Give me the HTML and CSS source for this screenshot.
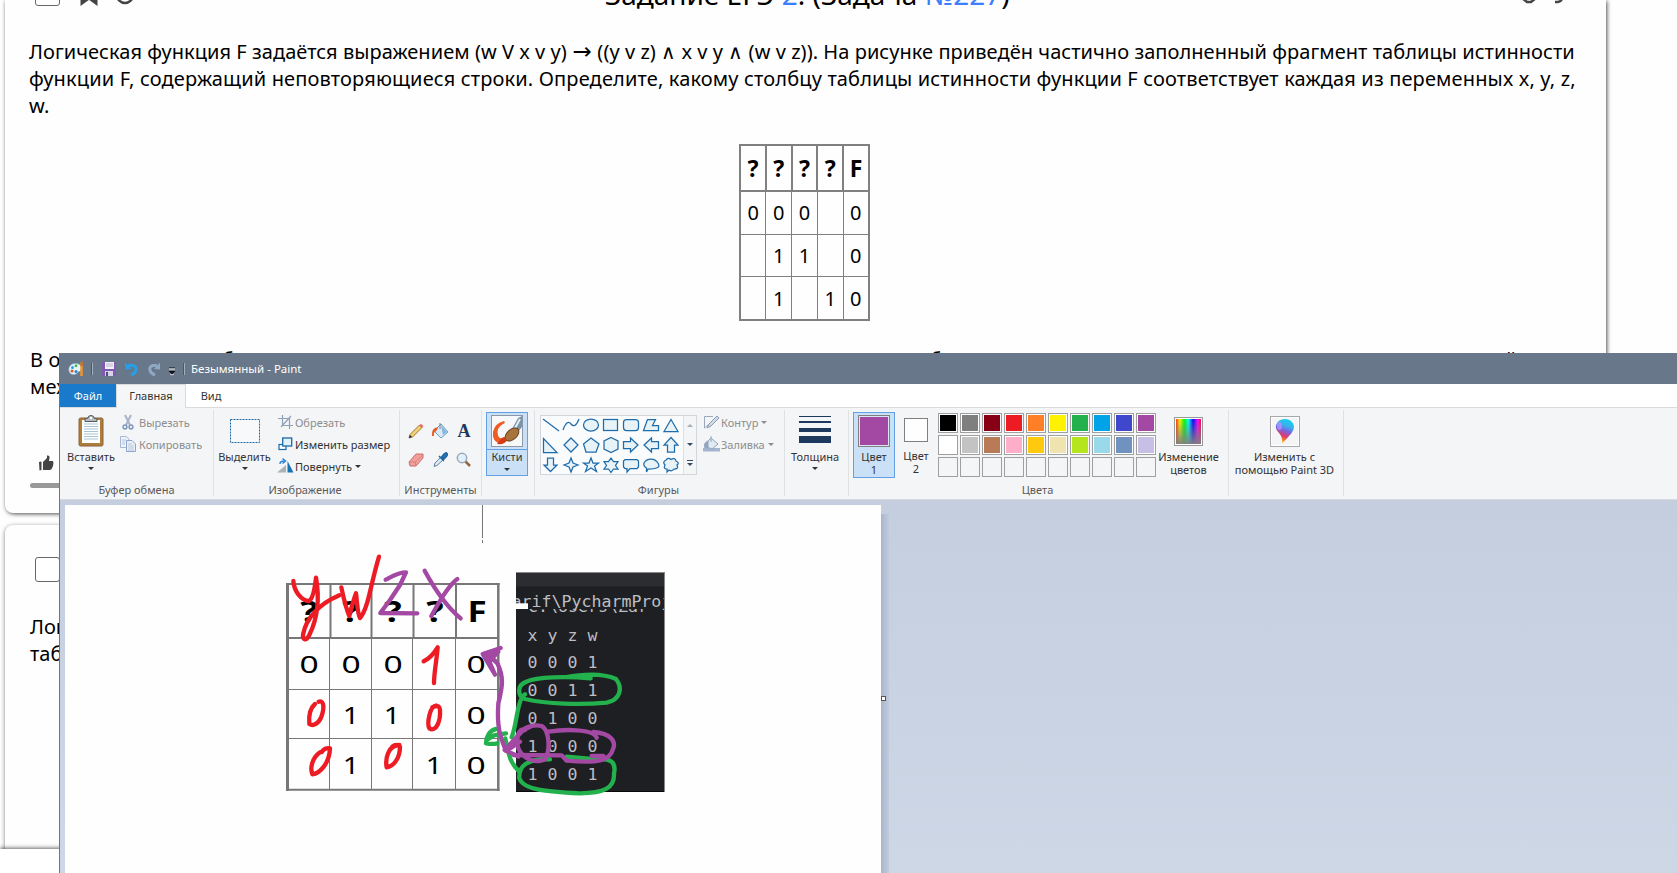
FILE: index.html
```html
<!DOCTYPE html>
<html lang="ru">
<head>
<meta charset="utf-8">
<title>Безымянный - Paint</title>
<link rel="stylesheet" href="styles.css">
</head>
<body>
<main class="page">
  <section class="card card-first">
    <header class="task-head">
      <div class="head-icons">
        <span class="checkbox"></span>
        <svg class="head-star" width="18" height="20" viewBox="0 0 18 20"><path d="M2 0V17L9 12L16 17V0" fill="none" stroke="#444" stroke-width="3"/></svg>
        <svg width="20" height="20" viewBox="0 0 20 20"><circle cx="7" cy="9" r="8" fill="none" stroke="#444" stroke-width="2.5"/></svg>
      </div>
      <h1 class="task-title">Задание ЕГЭ <a>2</a>. (Задача <a>№227</a>)</h1>
      <svg class="head-right" width="50" height="20" viewBox="0 0 50 20"><path d="M1 12L6 16H10L15 12M34 16H37Q41 15 41 12" fill="none" stroke="#444" stroke-width="2.5"/></svg>
    </header>
    <p class="task-text"><span class="l1">Логическая функция F задаётся выражением (w <span class="or">V</span> x v y) <span class="to">→</span> ((y v z) ∧ x v y ∧ (w v z)). На рисунке приведён частично заполненный фрагмент таблицы истинности</span><br><span class="l2">функции F, содержащий неповторяющиеся строки. Определите, какому столбцу таблицы истинности функции F соответствует каждая из переменных x, y, z,</span><br>w.</p>
    <table class="truth">
      <tr><th>?</th><th>?</th><th>?</th><th>?</th><th>F</th></tr>
      <tr><td>0</td><td>0</td><td>0</td><td></td><td>0</td></tr>
      <tr><td></td><td>1</td><td>1</td><td></td><td>0</td></tr>
      <tr><td></td><td>1</td><td></td><td>1</td><td>0</td></tr>
    </table>
    <p class="answer-text">В ответе напишите буквы x, y, z, w в том порядке, в котором идут соответствующие им столбцы. Буквы в ответе пишите подряд, никаких разделителей<br>между буквами ставить не нужно.</p>
    <svg class="thumb" width="16" height="16" viewBox="0 0 16 16"><path d="M1 7L3.500 6.500V15L1.500 15.500ZM5 7L9 3V0.500Q12 0 11.500 3L11 6H15Q16 8 15 11Q14 14.500 12 15H5Z" fill="#444"/></svg>
    <div class="vote-bar"></div>
  </section>
  <section class="card card-second">
    <span class="checkbox"></span>
    <p class="second-text">Логическая функция<br>таблицы истинности</p>
  </section>
  <footer class="bottom-bar"></footer>
</main>

<section class="paint">
  <header class="titlebar">
    <svg width="16" height="16" viewBox="0 0 16 16"><path d="M1 10C0 5 4 2 8 2.500C13 3 14 6 13 9C12 11 11 10 10 11C9 14 2 15 1 10Z" fill="#e6f4fa" stroke="#7bb8d4" stroke-width=".6"/><circle cx="4" cy="10" r="1.500" fill="#e5531f"/><circle cx="4.500" cy="6.500" r="1.500" fill="#2e9fe0"/><circle cx="8" cy="4.800" r="1.400" fill="#3fae49"/><circle cx="8" cy="10.500" r="1.500" fill="#2784c8"/><path d="M13.500 3V15" stroke="#f0962b" stroke-width="2.500"/><path d="M12 1.500L15 0V5H12.500Z" fill="#bd7743"/></svg>
    <i class="tb-sep"></i>
    <svg class="ico-save" width="14" height="14" viewBox="0 0 14 14"><path d="M0 0H14V14H0Z" fill="#7d5cb0"/><path d="M3 0H12V7H3Z" fill="#f4f0f8"/><path d="M4 2H11M4 4H11" stroke="#b9b4c5"/><path d="M3 9H11V14H3Z" fill="#d8d4e8"/><path d="M4 10H6V14H4Z" fill="#58458a"/></svg>
    <svg class="ico-undo" width="14" height="14" viewBox="0 0 14 14"><path d="M3 3.500H8Q12 4.500 11 8.500Q10 11.500 6 13" fill="none" stroke="#259fe8" stroke-width="3"/><path d="M0 .500L.500 7.500L7 7Z" fill="#259fe8"/></svg>
    <svg class="ico-redo" width="14" height="14" viewBox="0 0 14 14"><path d="M10 3.500H6Q2 4.500 3 8.500Q4 11.500 8 13" fill="none" stroke="#8fa9c4" stroke-width="3"/><path d="M13 .500V7.500L7 7Z" fill="#8fa9c4"/></svg>
    <svg class="ico-more" width="8" height="8" viewBox="0 0 8 8"><path d="M1 1H7" stroke="#111"/><path d="M1 2H7" stroke="#fff"/><path d="M.500 4H7.500L4 7.500Z" fill="#111"/><path d="M2 7L4 8L6 7" stroke="#fff" fill="none" stroke-width=".7"/></svg>
    <i class="tb-sep"></i>
    <span class="title">Безымянный - Paint</span>
  </header>
  <nav class="tabs"><span class="tab tab-file">Файл</span><span class="tab tab-home">Главная</span><span class="tab tab-view">Вид</span></nav>

  <div class="ribbon">
    <div class="group g-clip">
      <div class="tools">
        <div class="big">
          <svg width="26" height="32" viewBox="0 0 26 32"><rect x="1" y="3" width="24" height="28" rx="1.500" fill="#ae7c3c" stroke="#8b6537"/><path d="M4 5H22V28H4Z" fill="#fdfefe"/><path d="M6 9H20M6 11.500H20M6 14H20M6 16.500H20M6 19H20M6 21.500H20M6 24H20" stroke="#a9c3d4"/><path d="M7 6.500V4L10 3Q10 .500 13 .500T16 3L19 4V6.500Z" fill="#b4bbc2" stroke="#535a61"/><circle cx="13" cy="3" r="1.200" fill="#fff"/></svg>
          <span>Вставить</span><i class="arrow"></i>
        </div>
        <div class="smalls off">
          <div class="small"><svg width="16" height="16" viewBox="0 0 16 16"><path d="M5 1L10 11M11 1L6 11" stroke="#a7b4c9" stroke-width="2"/><circle cx="5" cy="13" r="1.900" fill="none" stroke="#7f97bd" stroke-width="1.500"/><circle cx="11" cy="13" r="1.900" fill="none" stroke="#7f97bd" stroke-width="1.500"/></svg>Вырезать</div>
          <div class="small"><svg width="16" height="16" viewBox="0 0 16 16"><path d="M.500 .500H6L9 3V11.500H.500Z" fill="#edf3fa" stroke="#a6b8d3"/><path d="M6.500 4.500H12L15.500 8V15.500H6.500Z" fill="#e9f0f8" stroke="#8ea5c9"/><path d="M2 4H6M2 6H5M2 8H5M8 8H12M8 10H14M8 12H14M8 14H14" stroke="#aabdd8" stroke-width=".8"/></svg>Копировать</div>
        </div>
      </div>
      <div class="caption">Буфер обмена</div>
    </div>

    <div class="group g-image">
      <div class="tools">
        <div class="big">
          <svg width="32" height="32" viewBox="0 0 32 32"><rect x="1.500" y="4.500" width="29" height="23" fill="#f7f9fb" stroke="#1a69a8" stroke-dasharray="2 1"/></svg>
          <span>Выделить</span><i class="arrow"></i>
        </div>
        <div class="smalls">
          <div class="small off"><svg width="16" height="16" viewBox="0 0 16 16"><path d="M0 4.500H11.500V15M4.500 1V11.500H15M3 13L13 2" fill="none" stroke="#8fa0ba" stroke-width="1.200"/></svg>Обрезать</div>
          <div class="small"><svg width="16" height="16" viewBox="0 0 16 16"><rect x="1" y="8.500" width="7" height="5" fill="#fff" stroke="#1a69a8" stroke-width="1.200"/><rect x="4.700" y="2" width="9" height="8" fill="#e2f2fa" stroke="#1a69a8" stroke-width="1.300"/></svg>Изменить размер</div>
          <div class="small"><svg width="16" height="16" viewBox="0 0 16 16"><path d="M-1 14.500H8V7Z" fill="#aab2b8"/><path d="M9.500 3L15.500 14.500H9.500Z" fill="#1673b5"/><path d="M2 6Q2 3 6 3M4.500 .500L7.500 3L4.500 5.500" fill="none" stroke="#2783dc" stroke-width="1.500"/></svg>Повернуть<i class="arrow side"></i></div>
        </div>
      </div>
      <div class="caption cap-image">Изображение</div>
    </div>

    <div class="group g-tools">
      <div class="tools tool-grid">
        <svg width="16" height="16" viewBox="0 0 16 16"><path d="M1 15L2 11.500L11.500 2L14 4.500L4.500 14Z" fill="#f2d073" stroke="#9d7b34"/><path d="M1 15L2 12L4 14Z" fill="#222"/><path d="M11 2.500L13 .800L15.500 3.200L13.500 5Z" fill="#e86d65"/></svg>
        <svg width="16" height="16" viewBox="0 0 16 16"><path d="M5 5L9 1L16 9L9 15L3 9Z" fill="#d6e9f5" stroke="#6e9fc4"/><path d="M9 2L15 9L11 12Z" fill="#83b8de"/><path d="M0 13Q-1 5 6 4L5 7Q1 9 2 13Z" fill="#e65a1f"/><path d="M8 0V6" stroke="#7a8088"/></svg>
        <svg width="16" height="16" viewBox="0 0 16 16"><text class="letter-a" x="8" y="14" text-anchor="middle">A</text></svg>
        <svg width="16" height="16" viewBox="0 0 16 16"><path d="M1 10L8 2H15L15 6L8 14H2Z" fill="#f2a09b" stroke="#cb6c69"/><path d="M1 10L7.500 10L15 2.500M7.500 10V14" fill="none" stroke="#dc7e7b"/></svg>
        <svg width="16" height="16" viewBox="0 0 16 16"><path d="M2 14.500L3 11L9 5L11.500 7.500L5 13.500Z" fill="#d8e9f4" stroke="#66849e"/><path d="M7 4L12 9M9 6L12 2Q14 0 15 1.500T14 5L11 8" fill="#2476b5" stroke="#1c639f" stroke-width="1.500"/></svg>
        <svg width="16" height="16" viewBox="0 0 16 16"><path d="M9 9L14 14" stroke="#8e6845" stroke-width="2.500"/><circle cx="6" cy="6" r="4.700" fill="#e0f0fa" stroke="#9aa9b7" stroke-width="1.500"/></svg>
      </div>
      <div class="caption">Инструменты</div>
    </div>

    <div class="group g-brush">
      <div class="brush-btn">
        <div class="brush-top"><svg width="32" height="32" viewBox="0 0 32 32"><rect x=".500" y=".500" width="31" height="31" fill="#f6f8fa" stroke="#8c98a5"/><path d="M13 6Q15 8 12 9Q5 13 7 20Q8 25 14 22L18 24Q13 29 7 28Q1 25 2 17Q4 8 13 6Z" fill="#f05a23"/><path d="M21 14L27 3L31 1V12L25 19Z" fill="#7893aa"/><path d="M23 15L29 4" stroke="#e4edf2" stroke-width="2"/><ellipse cx="21" cy="19.500" rx="8" ry="5" transform="rotate(-42 21 19.500)" fill="#a8743a" stroke="#674522"/><path d="M10 24Q13 20 16 25Q14 30 6 29Z" fill="#d23d18"/></svg></div>
        <span>Кисти</span><i class="arrow"></i>
      </div>
    </div>

    <div class="group g-shapes">
      <div class="tools">
        <div class="gallery">
          <svg class="shapes" width="142" height="58" viewBox="541 416 142 58">
            <g fill="#e8f3f8" stroke="#1f6cab" stroke-width="1.250">
              <path d="M543 419L559 431" fill="none"/><path d="M563 430Q567 419 571 424T579 419" fill="none"/><ellipse cx="591" cy="425" rx="7.500" ry="6"/><rect x="603.500" y="419.500" width="14" height="11"/><rect x="623.500" y="419.500" width="15" height="11" rx="3"/><path d="M643.500 430.500L647.500 419.500H655.500L652.500 425.500H658.500V430.500Z"/><path d="M671 419.500L678 431.500H664Z"/>
              <path d="M543.500 438.500V452.500H557Z"/><path d="M571 438L578 445L571 452L564 445Z"/><path d="M591 438L599 444L596 452H586L583.500 444Z"/><path d="M611 437.500L618 441V449L611 452.500L604 449V441Z"/><path d="M623.500 441.500H630.500V438L638 445L630.500 452V448.500H623.500Z"/><path d="M658.500 441.500H651.500V438L644 445L651.500 452V448.500H658.500Z"/><path d="M667.500 452V445H664L671 437.500L678 445H674.500V452Z"/>
              <path d="M547.500 458V465H544L550.500 471.500L557 465H553.500V458Z"/><path d="M571 458L573 463L578 465L573 467L571 472L569 467L564 465L569 463Z"/><path d="M591 458L593 463H598.500L594.500 466L596.500 471.500L591 468L585.500 471.500L587.500 466L583.500 463H589Z"/><path d="M611 458L613.500 461.500H618L615.500 465.500L618 469H613.500L611 472.500L608.500 469H604L606.500 465.500L604 461.500H608.500Z"/><path d="M625 459.500H637L638.500 461V467L637 468.500H630L627 472V468.500H625L623.500 467V461Z"/><path d="M648 469L646.500 472V468Q643 466 644 463Q646 459 651 459T658.500 464T648 469Z"/><path d="M666 460Q668 457 671 459.500Q675 457 676 461Q680 463 677 465Q679 469 674 469Q672 472 669 470L667 472V469Q663 469 665 465Q662 462 666 460Z"/>
            </g>
          </svg>
          <div class="gal-scroll"><i class="up"></i><i class="down"></i><i class="down bar"></i></div>
        </div>
        <div class="smalls off">
          <div class="small"><svg width="17" height="16" viewBox="0 0 17 16"><path d="M10 2.500H1.500V14L13 4" fill="none" stroke="#9ba9bd"/><path d="M4 14L6 10L14 2L16 4L8 12Z" fill="#d3dbe7" stroke="#8a9ab5"/></svg>Контур<i class="arrow side"></i></div>
          <div class="small"><svg width="17" height="16" viewBox="0 0 17 16"><path d="M0 12H17V15.500H0Z" fill="#a4b4cf"/><path d="M3 7L8 2L15 8L9 13L4 11Z" fill="#e1e9f2" stroke="#92a4c0"/><path d="M2 12Q0 7 5 5V12M8 0V6" fill="#92a4c0" stroke="#92a4c0"/></svg>Заливка<i class="arrow side"></i></div>
        </div>
      </div>
      <div class="caption">Фигуры</div>
    </div>

    <div class="group g-thick">
      <div class="big"><svg width="32" height="32" viewBox="0 0 32 32"><path d="M0 1H32V2H0ZM0 6H32V8H0ZM0 13H32V17H0ZM0 21H32V28H0Z" fill="#1e395f"/></svg><span>Толщина</span><i class="arrow"></i></div>
    </div>

    <div class="group g-colors">
      <div class="tools">
        <div class="color-btn selected"><b class="sw sw-one"></b><span>Цвет<br>1</span></div>
        <div class="color-btn"><b class="sw sw-two"></b><span>Цвет<br>2</span></div>
        <div class="palette">
          <i class="c-black"></i><i class="c-gray"></i><i class="c-dred"></i><i class="c-red"></i><i class="c-orange"></i><i class="c-yellow"></i><i class="c-green"></i><i class="c-cyan"></i><i class="c-indigo"></i><i class="c-purple"></i>
          <i class="c-white"></i><i class="c-silver"></i><i class="c-brown"></i><i class="c-pink"></i><i class="c-gold"></i><i class="c-cream"></i><i class="c-lime"></i><i class="c-sky"></i><i class="c-steel"></i><i class="c-lav"></i>
          <i></i><i></i><i></i><i></i><i></i><i></i><i></i><i></i><i></i><i></i>
        </div>
        <div class="big edit"><div class="rainbow"></div><span>Изменение<br>цветов</span></div>
      </div>
      <div class="caption">Цвета</div>
    </div>

    <div class="group g-3d">
      <div class="big"><svg width="30" height="31" viewBox="0 0 30 31"><defs><linearGradient id="drop" x1=".7" y1="0" x2=".4" y2="1"><stop offset="0" stop-color="#12cfe9"/><stop offset=".28" stop-color="#36b4ef"/><stop offset=".5" stop-color="#7a62df"/><stop offset=".72" stop-color="#e03c6b"/><stop offset="1" stop-color="#ffb000"/></linearGradient></defs><rect x=".500" y=".500" width="29" height="30" fill="#f5f5f6" stroke="#a9a9ab"/><rect x="1.500" y="1.500" width="27" height="28" fill="none" stroke="#fff"/><path d="M12 27Q13 22 9 17Q5 13 6 9Q8 3 15 3Q22 3 24 10Q24 15 19 20Q15 25 12 27Z" fill="url(#drop)"/><ellipse cx="9.500" cy="10" rx="2.500" ry="4" fill="#b292ff" opacity=".8"/></svg><span>Изменить с<br>помощью Paint 3D</span></div>
    </div>
  </div>

  <div class="workspace">
    <div class="sheet">
      <svg width="816" height="368" viewBox="65 505 816 368">
        <path d="M482.500 505V538M482.500 540V543" stroke="#777"/>
        <g stroke="#777" fill="none">
          <path d="M286 584H499.500" stroke-width="2"/><path d="M287.500 583V791" stroke-width="3"/><path d="M498.300 583V791" stroke-width="2.500"/><path d="M286 789.700H499.500" stroke-width="2"/><path d="M288 638H498" stroke-width="2"/><path d="M288 689.500H498M288 738.500H498M329.500 638V790M371.500 638V790M412.500 638V790M455.500 638V790"/><path d="M330.500 584V638M371.500 584V638M413.500 584V638M456 584V638" stroke-width="2"/>
        </g>
        <g class="pic-head"><text transform="translate(309 622) scale(1.3 1)">?</text><text transform="translate(351 622) scale(1.3 1)">?</text><text transform="translate(393 622) scale(1.3 1)">?</text><text transform="translate(435 622) scale(1.3 1)">?</text><text transform="translate(477 622) scale(1.250 1)">F</text></g>
        <g class="pic-cell">
          <text transform="translate(309 673) scale(1.4 1)">0</text><text transform="translate(351 673) scale(1.4 1)">0</text><text transform="translate(393 673) scale(1.4 1)">0</text><text transform="translate(476 673) scale(1.4 1)">0</text>
          <text transform="translate(351 724) scale(1.2 1)">1</text><text transform="translate(392 724) scale(1.2 1)">1</text><text transform="translate(476 724) scale(1.4 1)">0</text>
          <text transform="translate(351 773.500) scale(1.2 1)">1</text><text transform="translate(434 773.500) scale(1.2 1)">1</text><text transform="translate(476 773.500) scale(1.4 1)">0</text>
        </g>
        <clipPath id="term"><path d="M516 572H664V792H516Z"/></clipPath><clipPath id="low"><path d="M516 609H664V618H516Z"/></clipPath>
        <path d="M516 572H664.700V792H516Z" fill="#1e1f22"/><path d="M516 572H664V586.500H516Z" fill="#2b2d30"/><path d="M516 572.500H664.500V792" fill="none" stroke="#888"/><path d="M516 791.500H664" stroke="#08080a"/>
        <g clip-path="url(#term)" class="code"><text x="511.500" y="606.700">arif\PycharmProj</text></g>
        <g clip-path="url(#low)" class="code"><text x="528" y="612">C:\Users\Zar</text></g>
        <path d="M516 603.300H528V609H516Z" fill="#fff"/>
        <g class="code"><text x="527.600" y="640.500">x y z w</text><text x="527.600" y="668">0 0 0 1</text><text x="527.600" y="696">0 0 1 1</text><text x="527.600" y="724">0 1 0 0</text><text x="527.600" y="752.300">1 0 0 0</text><text x="527.600" y="780.300">1 0 0 1</text></g>
        <g transform="translate(270 500) scale(.33333)" class="ink red">
          <path d="M70 243C72 275 95 302 117 303C130 295 135 260 138 233C150 300 140 360 118 405C108 425 95 420 100 400C108 360 140 315 208 286"/>
          <path d="M214 262C222 300 230 330 238 348C245 320 250 300 258 280C262 310 262 340 270 354C295 325 300 260 327 170"/>
          <path d="M461 484C480 475 495 455 503 442C500 480 492 520 492 549"/>
          <path d="M135 612C120 625 116 650 118 672C130 680 148 670 156 645C165 615 158 600 146 605"/>
          <path d="M499 617C480 616 470 670 478 685C500 698 512 660 510 630C508 614 500 617 487 622"/>
          <path d="M150 757C125 775 120 805 127 823C150 820 178 790 180 745C170 742 160 748 155 756"/>
          <path d="M388 735C355 735 345 775 350 802C370 800 390 775 390 740C385 733 375 733 367 740"/>
        </g>
        <g transform="translate(270 500) scale(.33333)" class="ink violet"><path d="M347 239C365 230 385 217 408 217L390 255L360 300L331 339L442 340"/><path d="M464 212C490 260 530 320 572 355M562 237C530 260 500 320 484 348"/></g>
        <g transform="translate(470 500) scale(.33333)" class="ink green">
          <path d="M362 535C290 529 200 530 170 545C140 555 142 588 165 597C230 612 330 615 410 608C450 600 460 565 438 537C400 520 340 522 285 532"/>
          <path d="M165 583C140 600 142 670 125 712M78 687C60 690 48 710 48 730C60 732 70 733 82 730M50 720L72 706L108 700M106 715C115 760 120 790 148 815"/>
          <path d="M240 778C170 775 145 800 148 835C160 870 230 875 330 880C400 880 435 865 432 820C440 785 420 775 380 778L290 770"/>
        </g>
        <g transform="translate(470 500) scale(.33333)" class="ink violet">
          <path d="M92 444L38 462L75 524L58 485L85 455L45 468Q65 470 82 490C102 530 98 560 85 610C80 680 90 710 108 752"/>
          <path d="M185 678L160 690L104 750L145 770L110 752L150 725M165 690C145 680 137 720 145 745C160 780 200 790 225 778C242 750 238 690 215 678C180 670 140 690 135 730"/>
          <path d="M235 695C280 688 370 685 380 713M370 696C425 700 437 725 430 745C420 785 380 790 290 782L275 766L130 765M365 768L400 768"/>
        </g>
      </svg>
    </div>
    <i class="sheet-shadow"></i><i class="handle"></i>
  </div>
</section>
</body>
</html>
```
FILE: styles.css
```css
* { box-sizing: border-box; }
html, body { margin: 0; height: 873px; overflow: hidden; background: #fefefe; }
body { position: relative; font-family: "Noto Sans", "Open Sans", sans-serif; color: #000; }
p, h1 { margin: 0; font-weight: 400; }
svg { display: block; flex: none; overflow: visible; }

.page { height: 873px; overflow: hidden; }
.card { width: 1601px; margin-left: 5px; background: #fefefe; box-shadow: 1px 1px 4px rgba(0,0,0,.7); }
.card-first { height: 513px; padding: 0 25px; border-radius: 0 0 8px 8px; }
.task-head { display: flex; height: 38px; padding: 0 0 0 5px; }
.head-icons { display: flex; margin-top: -14px; height: 20px; width: 108px; }
.checkbox { display: block; flex: none; width: 25px; height: 25px; margin-top: -5px; border: 1px solid #666; border-radius: 3px; background: #fff; }
.head-star { margin: 0 20px; }
.head-right { margin: -14px 10px 0 auto; }
.task-title { margin: -25px 0 0 462px; font-size: 28px; line-height: 38px; white-space: nowrap; }
.task-title a { color: #3d7eff; }
.task-text, .answer-text, .second-text { font-size: 20px; line-height: 27px; white-space: nowrap; }
.task-text { margin-left: -1px; height: 106px; }
.l1 { letter-spacing: .05px; }
.l2 { letter-spacing: .15px; }
.or { display: inline-block; width: 12px; }
.to { display: inline-block; width: 20px; line-height: 20px; font-family: "DejaVu Sans", sans-serif; font-size: 23px; text-align: center; }
.truth { margin: 0 0 0 709px; width: 131px; height: 177px; border-collapse: collapse; border: 2px solid #808080; table-layout: fixed; }
.truth th, .truth td { padding: 0; border: 1px solid #808080; text-align: center; font-size: 20px; }
.truth th { border-width: 2px; font-size: 23px; }
.truth tr:first-child { height: 46px; }
.answer-text { margin-top: 25px; letter-spacing: .1px; }
.thumb { margin: 55px 0 0 8px; }
.vote-bar { width: 800px; height: 5px; margin-top: 12px; border-radius: 3px; background: #999; }
.card-second { height: 400px; margin-top: 12px; padding: 37px 30px; border-radius: 8px 8px 0 0; box-shadow: 0 1px 4px rgba(0,0,0,.5); }
.second-text { margin: 31px 0 0 -5px; }
.bottom-bar { position: absolute; left: 0; right: 0; top: 849px; height: 24px; background: #fff; box-shadow: 0 -1px 4px rgba(0,0,0,.6); }

.paint { position: absolute; left: 59px; top: 353px; width: 1618px; height: 520px; border-left: 1px solid #68778b; background: #c5cede; font-size: 11px; color: #333; }
.titlebar { display: flex; align-items: center; height: 31px; padding-left: 8px; background: #687789; color: #fff; }
.tb-sep { width: 2px; height: 12px; margin-left: 7px; background: #a5afba; border-left: 1px solid #4c5867; }
.ico-save { margin-left: 9px; }
.ico-undo { margin-left: 9px; }
.ico-redo { margin-left: 8px; }
.ico-more { margin: 4px 0 0 7px; }
.title { margin: -1px 0 0 6px; font-size: 11.500px; white-space: nowrap; }
.tabs { display: flex; height: 24px; background: #fff; border-bottom: 1px solid #dadbdc; }
.tab { height: 24px; line-height: 23px; text-align: center; }
.tab-file { width: 56px; height: 23px; background: #1979ca; color: #fff; }
.tab-home { width: 70px; background: #f4f6f7; border: 1px solid #dadbdc; border-bottom: 0; line-height: 21px; }
.tab-view { width: 50px; }

.ribbon { display: flex; height: 92px; padding: 2px 0 3px; background: #f4f5f7; border-bottom: 1px solid #d5d9e0; }
.group { display: flex; flex-direction: column; justify-content: space-between; flex: none; height: 86px; border-right: 1px solid #e0e1e3; white-space: nowrap; }
.tools { display: flex; height: 70px; }
.caption { height: 16px; line-height: 19px; text-align: center; color: #5a5a5a; }
.cap-image { padding-right: 3px; }
.g-clip { width: 154px; }
.g-image { width: 186px; }
.g-tools { width: 82px; }
.g-brush { width: 53px; }
.g-shapes { width: 250px; }
.g-shapes .caption, .g-colors .caption { padding-right: 2px; }
.g-thick { width: 64px; }
.g-colors { width: 380px; }
.g-3d { width: 115px; }
.big { display: flex; flex-direction: column; align-items: center; width: 62px; padding-top: 5px; line-height: 13px; text-align: center; }
.big > svg { margin-bottom: 3px; }
.arrow { width: 0; height: 0; margin-top: 4px; border: 3px solid transparent; border-top-color: currentColor; border-bottom: 0; }
.arrow.side { margin: 0 0 0 3px; }
.smalls { display: flex; flex-direction: column; padding-top: 1px; }
.small { display: flex; align-items: center; height: 22px; }
.small > svg { margin-right: 1px; }
.off { color: #8d8d8d; }
.g-clip .small > svg { margin-right: 3px; }
.g-clip .smalls { margin-left: -2px; }
.g-image .big { width: 61px; }
.g-image .smalls { margin-left: 3px; }
.tool-grid { display: grid; grid-template-columns: repeat(3, 24px); grid-template-rows: 29px 29px; place-items: center; padding: 6px 0 0 4px; }
.letter-a { font: bold 18px "Liberation Serif", serif; fill: #1e395f; }
.brush-btn { display: flex; flex-direction: column; align-items: center; width: 42px; height: 64px; margin: 2px 0 0 4px; border: 1px solid #62a2e4; background: #c9e0f7; line-height: 14px; }
.brush-top { width: 40px; height: 37px; padding: 2px 4px; border-bottom: 1px solid #62a2e4; }
.gallery { display: flex; width: 157px; height: 60px; margin: 5px 0 0 5px; border: 1px solid #d2d5da; background: #fafbfc; }
.gal-scroll { display: flex; flex-direction: column; width: 14px; height: 58px; align-items: center; justify-content: space-around; border-left: 1px solid #dde0e3; background: #f4f5f7; }
.up, .down { border: 3px solid transparent; border-bottom-color: #a6adb7; border-top: 0; }
.down { border: 3px solid transparent; border-top-color: #3b4a63; border-bottom: 0; }
.down.bar { position: relative; }
.down.bar::before { content: ""; position: absolute; left: -3px; top: -6px; width: 6px; height: 1px; background: #3b4a63; }
.g-shapes .smalls { margin-left: 6px; }
.g-thick .big { width: 60px; }
.color-btn { display: flex; flex-direction: column; align-items: center; width: 42px; height: 66px; margin: 2px 0 0 4px; padding-top: 6px; line-height: 13px; text-align: center; }
.color-btn + .color-btn { margin-left: 0; }
.selected { padding-top: 2px; border: 1px solid #62a2e4; background: #c9e0f7; }
.sw { margin-bottom: 7px; width: 24px; height: 24px; border: 1px solid #808080; background: #fefefe; }
.sw-one { width: 32px; height: 32px; margin-bottom: 3px; background: #a349a4; box-shadow: inset 0 0 0 1px #d9e8f5; }
.palette { display: grid; grid-template-columns: repeat(10, 20px); grid-auto-rows: 20px; gap: 2px; margin: 3px 0 0 1px; }
.palette i { border: 1px solid #a0a0a0; }
.palette i:nth-child(-n+20) { box-shadow: inset 0 0 0 1px #fff; }
.c-black { background: #000; } .c-gray { background: #7f7f7f; } .c-dred { background: #880015; } .c-red { background: #ed1c24; } .c-orange { background: #ff7f27; }
.c-yellow { background: #fff200; } .c-green { background: #22b14c; } .c-cyan { background: #00a2e8; } .c-indigo { background: #3f48cc; } .c-purple { background: #a349a4; }
.c-white { background: #fff; } .c-silver { background: #c3c3c3; } .c-brown { background: #b97a57; } .c-pink { background: #ffaec9; } .c-gold { background: #ffc90e; }
.c-cream { background: #efe4b0; } .c-lime { background: #b5e61d; } .c-sky { background: #99d9ea; } .c-steel { background: #7092be; } .c-lav { background: #c8bfe7; }
.edit { width: 65px; padding-top: 7px; }
.rainbow { width: 29px; height: 29px; margin-bottom: 4px; border: 1px solid #999; box-shadow: inset 0 0 0 1px #fff; background: linear-gradient(transparent, #808080), linear-gradient(90deg, red, #ff0 18%, #0f0 34%, #0ff 50%, #00f 67%, #f0f 84%, red); }
.g-3d .big { width: 111px; padding-top: 6px; }

.workspace { position: relative; height: 373px; padding: 5px 0 0 5px; background: linear-gradient(#c5cede, #cdd7e6); }
.sheet { width: 816px; height: 368px; background: #fefefe; overflow: hidden; }
.sheet-shadow { position: absolute; left: 821px; top: 14px; width: 8px; height: 359px; background: linear-gradient(90deg, #a9b6cb, #c0cbdc); }
.handle { position: absolute; left: 821px; top: 196px; width: 5px; height: 5px; border: 1px solid #555; background: #fff; }
.pic-head { font-weight: 700; font-size: 28px; text-anchor: middle; }
.pic-cell { font-size: 24px; text-anchor: middle; }
.code { font-family: "DejaVu Sans Mono", monospace; font-size: 16.600px; fill: #bcbec4; white-space: pre; }
.ink { fill: none; stroke-width: 13; stroke-linecap: round; stroke-linejoin: round; }
.red { stroke: #ed1c24; }
.violet { stroke: #a349a4; }
.green { stroke: #22b14c; }
```
